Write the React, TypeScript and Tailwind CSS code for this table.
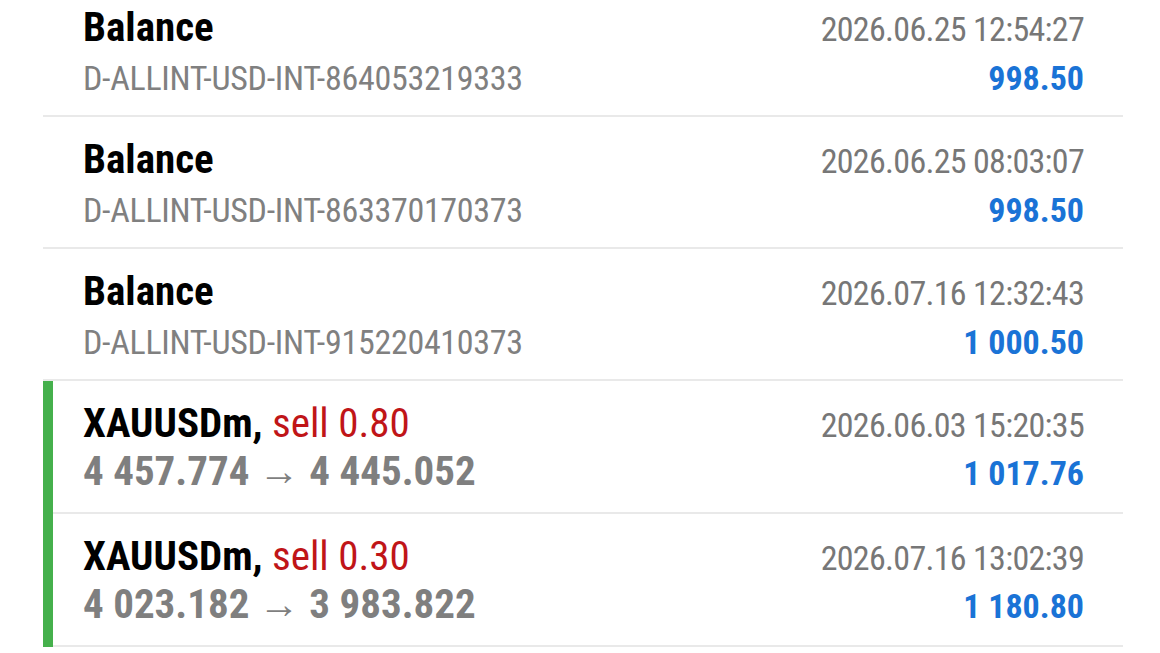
import React from "react";

type Row = {
  kind: "balance" | "trade";
  title: string;
  side?: string;
  sub: string;
  time: string;
  amount: string;
};

const rows: Row[] = [
  { kind: "balance", title: "Balance", sub: "D-ALLINT-USD-INT-864053219333", time: "2026.06.25 12:54:27", amount: "998.50" },
  { kind: "balance", title: "Balance", sub: "D-ALLINT-USD-INT-863370170373", time: "2026.06.25 08:03:07", amount: "998.50" },
  { kind: "balance", title: "Balance", sub: "D-ALLINT-USD-INT-915220410373", time: "2026.07.16 12:32:43", amount: "1 000.50" },
  { kind: "trade", title: "XAUUSDm,", side: "sell 0.80", sub: "4 457.774 → 4 445.052", time: "2026.06.03 15:20:35", amount: "1 017.76" },
  { kind: "trade", title: "XAUUSDm,", side: "sell 0.30", sub: "4 023.182 → 3 983.822", time: "2026.07.16 13:02:39", amount: "1 180.80" },
];

function HistoryRow({ row }: { row: Row }) {
  const trade = row.kind === "trade";
  return (
    <div className="flex">
      {trade && <div className="w-[10px] shrink-0 bg-[#45b04c]" />}
      <div
        className={
          trade
            ? "flex flex-1 flex-col border-b-2 border-[#e9e9e9] pt-[22px] pb-[20px] pl-[30px] pr-[39px]"
            : "flex flex-1 flex-col border-b-2 border-[#e9e9e9] pt-[22px] pb-[20px] pl-[40px] pr-[39px]"
        }
      >
        <div className="flex items-baseline justify-between whitespace-nowrap leading-none">
          <span className="text-[41px] font-bold text-black">
            {row.title}
            {row.side && <span className="font-normal text-[#c01518]"> {row.side}</span>}
          </span>
          <span className="text-[34px] tracking-[-0.7px] text-[#777777]">{row.time}</span>
        </div>
        <div
          className={
            trade
              ? "mt-[7px] flex items-baseline justify-between whitespace-nowrap leading-none"
              : "mt-[13px] flex items-baseline justify-between whitespace-nowrap leading-none"
          }
        >
          {trade ? (
            <span className="text-[41px] font-bold text-[#7f7f7f]">{row.sub}</span>
          ) : (
            <span className="text-[34px] tracking-[-0.3px] text-[#808080]">{row.sub}</span>
          )}
          <span className="text-[34px] font-bold text-[#1a73d6]">{row.amount}</span>
        </div>
      </div>
    </div>
  );
}

export default function App() {
  return (
    <div className="h-[653px] w-[1160px] overflow-hidden bg-white font-['Roboto_Condensed','Roboto',sans-serif]">
      <div className="-mt-[15px] ml-[43px] w-[1080px]">
        {rows.map((r, i) => (
          <HistoryRow key={i} row={r} />
        ))}
      </div>
    </div>
  );
}
